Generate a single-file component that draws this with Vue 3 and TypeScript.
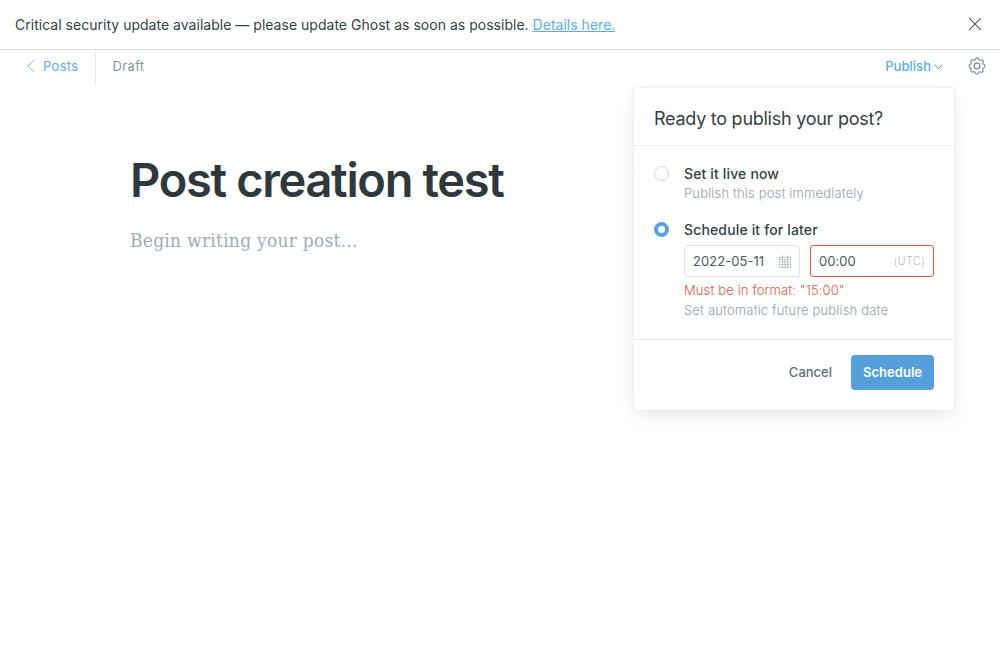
<script setup lang="ts">
import { ref } from 'vue'

type PublishMode = 'now' | 'schedule'

interface PublishOption {
  mode: PublishMode
  label: string
  description: string
}

const options: PublishOption[] = [
  { mode: 'now', label: 'Set it live now', description: 'Publish this post immediately' },
  { mode: 'schedule', label: 'Schedule it for later', description: 'Set automatic future publish date' },
]

const selected = ref<PublishMode>('schedule')
const alertVisible = ref(true)
const menuOpen = ref(true)
const date = ref('2022-05-11')
const time = ref('00:00')
</script>

<template>
  <div class="app">
    <aside v-if="alertVisible" class="alert">
      <p class="alert-text">Critical security update available — please update Ghost as soon as possible. <a href="#">Details here.</a></p>
      <button class="icon-button" aria-label="Close" @click="alertVisible = false">
        <svg width="14" height="14" viewBox="0 0 14 14" fill="none" stroke="#50585c" stroke-width="1.1" stroke-linecap="round"><path d="M1.3 1.3l11.4 11.4M12.7 1.3L1.3 12.7" /></svg>
      </button>
    </aside>

    <header class="toolbar">
      <a class="back" href="#">
        <svg width="8" height="12" viewBox="0 0 8 12" fill="none" stroke="#5baee9" stroke-width="0.8" stroke-linecap="round" stroke-linejoin="round"><path d="M7 .6L.8 6 7 11.4" /></svg>
        <span>Posts</span>
      </a>
      <span class="status">Draft</span>
      <div class="actions">
        <div class="publish">
          <button class="publish-trigger" @click="menuOpen = !menuOpen">
            <span>Publish</span>
            <svg width="9" height="6" viewBox="0 0 9 6" fill="none" stroke="#5d8fb4" stroke-width="1" stroke-linecap="round" stroke-linejoin="round"><path d="M.8 .8l3.7 4 3.7-4" /></svg>
          </button>
          <section v-if="menuOpen" class="menu">
            <h2 class="menu-title">Ready to publish your post?</h2>
            <div class="menu-body">
              <div v-for="option in options" :key="option.mode" class="option" @click="selected = option.mode">
                <span class="radio" :class="{ checked: selected === option.mode }"></span>
                <div class="option-content">
                  <div class="option-label">{{ option.label }}</div>
                  <template v-if="option.mode === 'schedule' && selected === 'schedule'">
                    <div class="fields">
                      <label class="field date-field">
                        <input v-model="date" type="text" class="date-input" />
                        <svg width="12" height="13" viewBox="0 0 12 13" fill="none" stroke="#a5b1b8" stroke-width="0.7">
                          <path d="M.5 2.4h11v10H.5zM.5 4.5h11M1.5 7h9M1.5 9.5h9M3.5 4.5v8M6 4.5v8M8.5 4.5v8" />
                          <path d="M3 .4v2.8M9 .4v2.8" stroke-width="1.1" />
                        </svg>
                      </label>
                      <label class="field time-field">
                        <input v-model="time" type="text" class="time-input" />
                        <span class="zone">(UTC)</span>
                      </label>
                    </div>
                    <div class="error">Must be in format: "15:00"</div>
                  </template>
                  <div class="option-description">{{ option.description }}</div>
                </div>
              </div>
            </div>
            <footer class="menu-footer">
              <button class="cancel" @click="menuOpen = false">Cancel</button>
              <button class="schedule">Schedule</button>
            </footer>
          </section>
        </div>
        <button class="icon-button" aria-label="Settings">
          <svg width="18" height="18" viewBox="0 0 18 18" fill="none" stroke="#738a94" stroke-width="1.1" stroke-linejoin="round">
            <circle cx="9" cy="9" r="2.9" />
            <path d="M7.3 2.1C7.6 .8 10.4 .8 10.7 2.1C11 3.4 12 3.8 13.1 3.1C14.2 2.3 16 4.2 15.1 5.2C14.3 6.2 14.7 7.1 15.9 7.3C17.2 7.6 17.2 10.4 15.9 10.7C14.7 11 14.3 11.9 15 13C15.8 14.1 14 15.9 12.9 15.1C11.9 14.3 11 14.7 10.7 15.9C10.4 17.2 7.6 17.2 7.3 15.9C7 14.7 6.1 14.3 5.1 15C4 15.8 2.1 14 2.9 12.9C3.7 11.9 3.3 11 2.1 10.7C.8 10.4 .8 7.6 2.1 7.3C3.3 7 3.7 6.1 3 5.1C2.2 4 4.1 2.1 5.1 2.9C6.1 3.7 7 3.3 7.3 2.1Z" />
          </svg>
        </button>
      </div>
    </header>

    <main class="editor">
      <h1 class="post-title">Post creation test</h1>
      <p class="placeholder">Begin writing your post...</p>
    </main>
  </div>
</template>

<style>
body { margin: 0; background: #fff; }
</style>

<style scoped>
.app {
  height: 660px;
  overflow: hidden;
  background: #fff;
  color: #343f44;
  font-family: Inter, "Liberation Sans", sans-serif;
  font-size: 13px;
  letter-spacing: 0.2px;
}
* { box-sizing: border-box; }
a { color: #5baee9; }
h1, h2, p { margin: 0; font-weight: 400; }
button { padding: 0; border: 0; background: none; font: inherit; letter-spacing: inherit; color: inherit; }
svg { display: block; }

.alert {
  display: flex;
  align-items: center;
  justify-content: space-between;
  height: 50px;
  padding: 0 18px 2px 15px;
  border-bottom: 1px solid #dcdfe1;
}
.alert-text { font-size: 14px; line-height: 20px; padding-top: 3px; white-space: nowrap; letter-spacing: 0.02px; }

.toolbar { display: flex; align-items: stretch; height: 34px; }
.back {
  display: flex;
  align-items: center;
  gap: 8px;
  width: 96px;
  padding: 0 0 2px 27px;
  border-right: 1px solid #e5eaed;
  text-decoration: none;
  letter-spacing: 0.3px;
}
.status { padding-left: 16.5px; line-height: 33px; color: #8296a1; letter-spacing: 0.35px; }
.actions { display: flex; align-items: center; gap: 25px; margin-left: auto; padding: 0 14px 2px 0; }
.publish { position: relative; }
.publish-trigger { display: flex; align-items: center; gap: 3px; color: #5baee9; font-weight: 500; letter-spacing: 0.03px; }
.publish-trigger svg { margin-top: 2px; }

.menu {
  position: absolute;
  top: 29px;
  right: -12px;
  width: 322px;
  border: 1px solid #eef1f3;
  border-radius: 4px;
  background: #fff;
  box-shadow: 0 8px 20px -4px rgba(40, 60, 75, 0.11), 0 0 12px rgba(40, 60, 75, 0.04);
}
.menu-title { height: 58px; padding-left: 20px; border-bottom: 1px solid #e9edef; font-size: 18px; line-height: 61px; letter-spacing: -0.26px; }
.menu-body { display: flex; flex-direction: column; gap: 16px; height: 194px; padding: 18px 20px 0; border-bottom: 1px solid #e5eaed; }
.option { display: flex; gap: 15px; }
.radio { flex: none; width: 15px; height: 15px; margin-top: 2px; border: 1px solid #c3d8e7; border-radius: 50%; background: #fff; }
.radio.checked { border: 4px solid #5aa4e2; }
.option-content { width: 250px; }
.option-label { font-size: 14px; line-height: 20px; font-weight: 500; letter-spacing: 0.15px; }
.option-description { margin-top: -1px; padding-bottom: 1px; line-height: 20px; color: #92a2ab; font-weight: 300; letter-spacing: 0.16px; }
.fields { display: flex; gap: 10px; margin: 5px 0 4px; }
.field { display: flex; align-items: center; justify-content: space-between; height: 32px; padding: 0 8px; border: 1px solid #d7e3ea; border-radius: 3px; }
.date-field { width: 116px; }
.time-field { width: 124px; border-color: #dc5c42; }
input { min-width: 0; padding: 0; border: 0; outline: 0; background: none; font: inherit; color: #4d5960; letter-spacing: 0.05px; }
.date-input { width: 80px; }
.time-input { width: 60px; }
.zone { color: #b0bcc3; font-size: 11px; font-weight: 300; }
.error { margin-top: -1px; padding-bottom: 1px; color: #e05a40; line-height: 20px; font-weight: 300; letter-spacing: 0.13px; }
.menu-footer { display: flex; align-items: center; justify-content: flex-end; gap: 19px; height: 70px; padding: 0 20px 5px; }
.cancel { padding-bottom: 2px; color: #5d7079; font-weight: 500; letter-spacing: 0; }
.schedule { width: 83px; height: 35px; padding-bottom: 2px; border-radius: 4px; background: #559fda; color: #fff; font-weight: 600; letter-spacing: 0.05px; }

.editor { width: 740px; margin: 0 auto; padding-top: 68px; }
.post-title { color: #2f383c; font-size: 47px; font-weight: 600; line-height: 55px; letter-spacing: -1.33px; }
.placeholder { margin-top: 17px; color: #9dacb6; font-family: "DejaVu Serif Condensed", "DejaVu Serif", "Liberation Serif", serif; font-size: 19px; font-stretch: condensed; line-height: 32px; letter-spacing: 0.25px; }
</style>
